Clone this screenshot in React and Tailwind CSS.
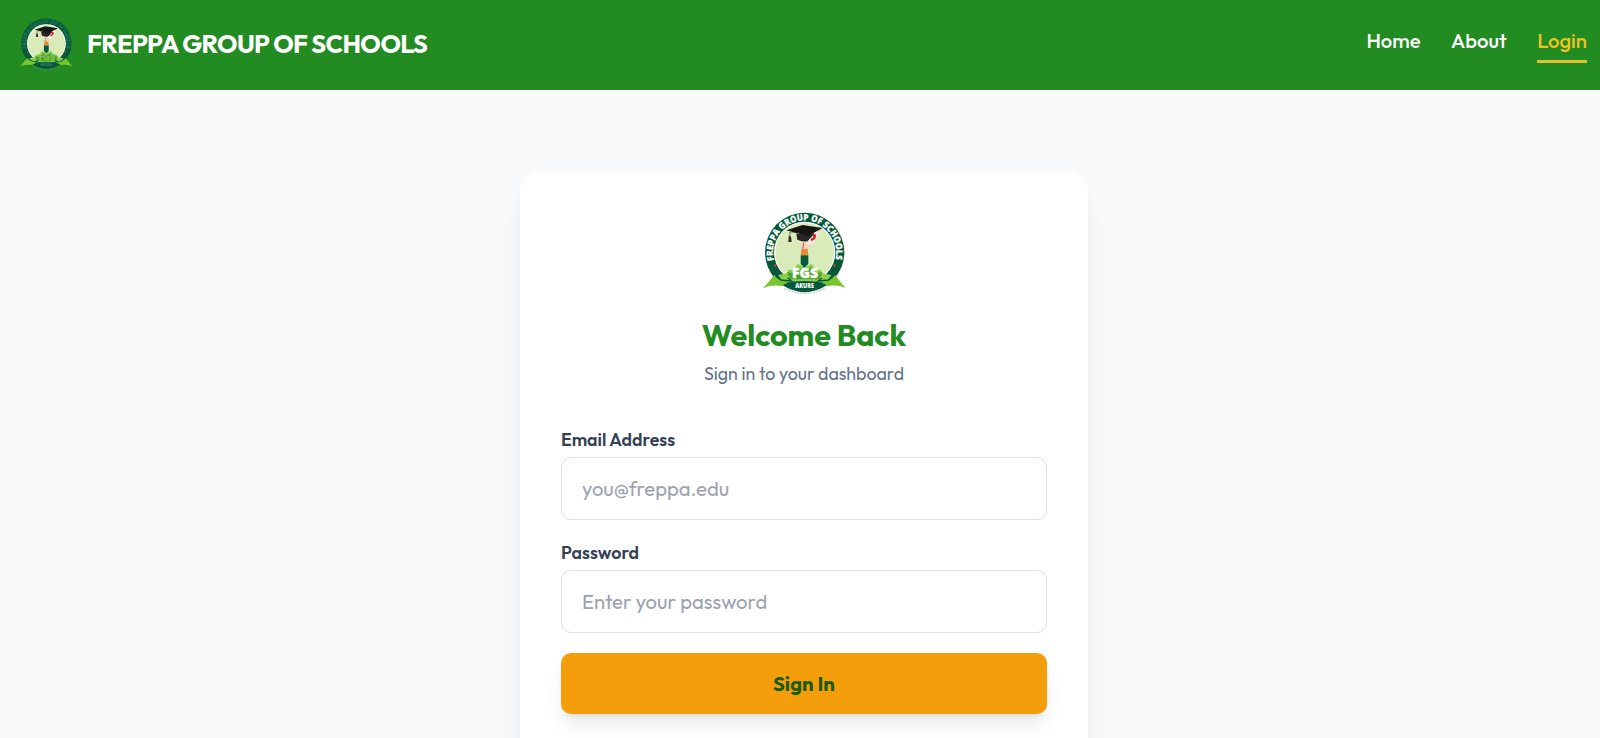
const SchoolLogo = ({ id, className, muted }) => (
  <svg className={`overflow-visible ${className}`} viewBox="24 24 246 246" fill="none">
    <defs>
      <path id={`${id}-arc`} d="M57.8 171 A95 95 0 1 1 240.2 171" />
    </defs>
    <circle cx="149" cy="145" r="119" fill="#04593a" />
    <circle cx="149" cy="145" r="92" fill="#fff" />
    <circle cx="149" cy="145" r="88" fill="#d9ebb9" />
    <text
      fill={muted ? '#1d7350' : '#fff'}
      stroke={muted ? '#1d7350' : '#fff'}
      strokeWidth="0.5"
      fontFamily="Open Sans, sans-serif"
      fontWeight="800"
      fontSize="27"
      textLength="344"
      lengthAdjust="spacingAndGlyphs"
    >
      <textPath href={`#${id}-arc`} startOffset="3">FREPPA GROUP OF SCHOOLS</textPath>
    </text>
    <circle cx="60" cy="185" r="4" fill="#b5412c" />
    <circle cx="239" cy="185" r="4" fill="#b5412c" />

    {/* leaves and ribbon */}
    <path d="M90 240 L66 214 L96 208 L100 197 L116 198 L128 180 L149 190 L170 180 L184 198 L198 197 L202 208 L232 214 L208 240 Z" fill="#8ccf4b" />
    <path d="M104 226 L96 204 L118 208 L130 188 L149 204 L168 188 L180 208 L202 204 L194 226 Z" fill="#4da52f" />
    <path d="M24 252 Q42 234 58 213 Q68 230 96 232 L82 246 Q48 242 24 252 Z" fill="#78c52f" />
    <path d="M272 252 Q256 234 240 213 Q230 230 202 232 L216 246 Q250 242 272 252 Z" fill="#78c52f" />
    <path d="M66 213 L78 228 L110 231 L98 222" stroke="#04593a" strokeWidth="4" />
    <path d="M233 213 L221 228 L189 231 L201 222" stroke="#04593a" strokeWidth="4" />

    {/* hand holding the pencil */}
    <path d="M138 120 L150 108 L164 112 L162 128 L157 142 L140 142 Z" fill="#f2d3bf" />
    <path d="M139 136 L158 134 L160 154 L137 154 Z" fill="#e88a35" />
    <path d="M137 154 H160 V180 L148 191 L137 180 Z" fill="#075b3d" />
    <path d="M146 116 L143 136" stroke="#c65a43" strokeWidth="3" />

    {/* cap and scroll */}
    <path d="M124 90 L176 86 L174 108 Q152 118 127 107 Z" fill="#292526" />
    <path d="M94 79 L143 63 L203 72 L159 96 Z" fill="#171617" />
    <path d="M128 88 Q112 82 105 84 L104 100" stroke="#2b2524" strokeWidth="2" />
    <path d="M101 97 h7 l2 17 h-10 z" fill="#3a2926" />
    <path d="M152 118 L186 81 L197 88 L172 124 Z" fill="#f7e9df" />
    <path d="M172 88 L184 92 L181 105 L169 112 L167 104 L175 100 Z" fill="#c72b31" />

    <path d="M92 236 Q149 226 207 236 Q183 264 149 265 Q115 264 92 236 Z" fill="#04593a" />
    <text
      x="150"
      y="222"
      textAnchor="middle"
      textLength="78"
      lengthAdjust="spacingAndGlyphs"
      fill={muted ? '#86c94e' : '#fff'}
      stroke={muted ? '#3f8f35' : '#fff'}
      strokeWidth="1"
      fontFamily="Open Sans, sans-serif"
      fontWeight="800"
      fontSize="41"
    >
      FGS
    </text>
    <text
      x="149"
      y="253"
      textAnchor="middle"
      textLength="56"
      lengthAdjust="spacingAndGlyphs"
      fill={muted ? '#2a7d56' : '#fff'}
      fontFamily="Open Sans, sans-serif"
      fontWeight="800"
      fontSize="22"
    >
      AKURE
    </text>
    <path d="M88 254 Q149 282 211 253" stroke={muted ? '#5f8f68' : '#c9b9bd'} strokeWidth="4" strokeDasharray="5 3" />
  </svg>
)

const Navbar = () => (
  <header className="flex h-[90px] items-center justify-between bg-[#228b22] pl-5 pr-[13px]">
    <div className="flex items-center gap-[15px] pb-[2px]">
      <SchoolLogo id="nav" className="size-[52px]" muted />
      <span className="whitespace-nowrap text-[25.4px] font-bold leading-8 tracking-[-0.635px] text-white">
        FREPPA GROUP OF SCHOOLS
      </span>
    </div>
    <nav className="flex gap-[30.5px] text-[20.3px] font-medium leading-[25px] text-white">
      <a href="#home" className="pb-[10px]">Home</a>
      <a href="#about" className="pb-[10px]">About</a>
      <a href="#login" className="border-b-[3px] border-[#e3c12e] pb-[7px] text-[#f0c420]">Login</a>
    </nav>
  </header>
)

const Field = ({ label, ...props }) => (
  <label className="block">
    <span className="block text-[17.8px] font-semibold leading-[22px] text-[#334155]">{label}</span>
    <input
      {...props}
      className="mt-[6px] block h-[62.5px] w-full rounded-[10px] border border-[#dddfe3] bg-white px-5 text-[20.3px] outline-none placeholder:text-[#9ca3af]"
    />
  </label>
)

const LoginCard = () => (
  <div className="h-[640px] w-[568px] shrink-0 rounded-[20px] bg-white px-[41px] pt-10 shadow-[0_25px_32px_-6px_rgba(0,0,0,0.1),0_10px_13px_-8px_rgba(0,0,0,0.1)]">
    <div className="flex flex-col items-center">
      <SchoolLogo id="card" className="size-[82px]" />
      <h1 className="mt-[21px] whitespace-nowrap text-[30.5px] font-bold leading-10 text-[#228b22]">Welcome Back</h1>
      <p className="mt-[7px] whitespace-nowrap text-[17.8px] leading-6 text-[#64748b]">Sign in to your dashboard</p>
    </div>
    <form className="mt-[43px]">
      <Field label="Email Address" type="email" placeholder="you@freppa.edu" />
      <div className="mt-[22.5px]">
        <Field label="Password" type="password" placeholder="Enter your password" />
      </div>
      <button
        type="button"
        className="mt-[20.5px] h-[61px] w-full rounded-[10px] bg-[#f59e0b] pt-px text-[20.3px] font-bold text-[#1c5a0c] shadow-[0_12px_19px_-4px_rgba(0,0,0,0.1),0_5px_8px_-5px_rgba(0,0,0,0.1)]"
      >
        Sign In
      </button>
    </form>
  </div>
)

export default function App() {
  return (
    <div className="h-[738px] overflow-hidden bg-[#f8fafc] font-[Outfit,Lato,sans-serif]">
      <Navbar />
      <main className="flex justify-center pl-2 pt-[82px]">
        <LoginCard />
      </main>
    </div>
  )
}
